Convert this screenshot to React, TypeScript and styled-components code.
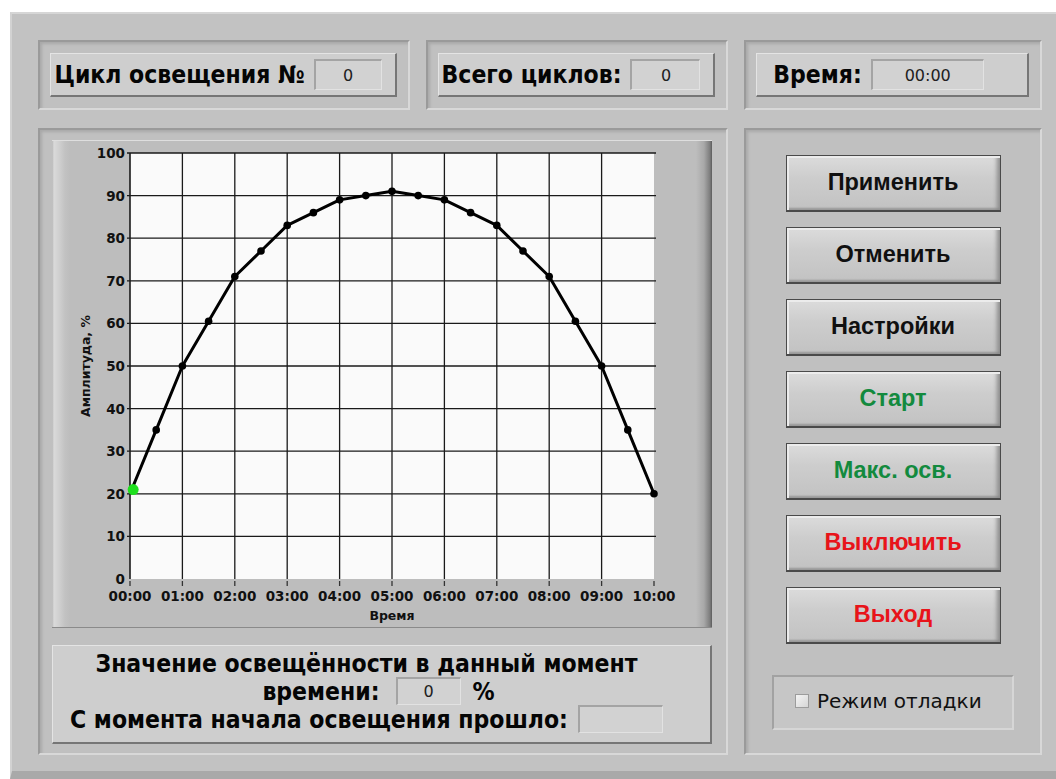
import styled, { createGlobalStyle } from "styled-components";

const GlobalStyle = createGlobalStyle`
  html, body {
    margin: 0;
    padding: 0;
    background: #ffffff;
  }
  body {
    font-family: "DejaVu Sans", sans-serif;
  }
`;

const Window = styled.div`
  margin: 12px 0 0 10px;
  box-sizing: border-box;
  height: 767px;
  background: #c2c2c2;
  border-top: 2px solid #d6d6d6;
  border-left: 2px solid #d2d2d2;
  border-bottom: 8px solid #a9a9a9;
  padding: 26px 16px 16px 26px;
  display: grid;
  grid-template-columns: 372px 302px 298px;
  grid-template-rows: 70px 627px;
  column-gap: 16px;
  row-gap: 18px;
`;

const Frame = styled.div<{ $span?: number }>`
  grid-column: span ${(p) => p.$span ?? 1};
  box-sizing: border-box;
  background: #c0c0c0;
  border-top: 2px solid #9a9a9a;
  border-left: 2px solid #9a9a9a;
  border-right: 2px solid #d8d8d8;
  border-bottom: 2px solid #d8d8d8;
  box-shadow: inset 2px 2px 3px rgba(0, 0, 0, 0.12);
`;

const TopFrame = styled(Frame)`
  padding: 11px 11px 11px 10px;
`;

const Plate = styled.div`
  box-sizing: border-box;
  background: #cecece;
  border-top: 1px solid #e4e4e4;
  border-left: 1px solid #e4e4e4;
  border-right: 2px solid #767676;
  border-bottom: 2px solid #767676;
`;

const LabelPlate = styled(Plate)<{ $shift?: number }>`
  height: 100%;
  display: flex;
  align-items: center;
  justify-content: center;
  gap: 9px;
  padding-right: ${(p) => p.$shift ?? 10}px;
`;

const Label = styled.span`
  font-family: "DejaVu Sans Condensed", "DejaVu Sans", sans-serif;
  font-stretch: condensed;
  font-weight: bold;
  font-size: 24.5px;
  color: #050505;
  white-space: nowrap;
`;

const Field = styled.div<{ $w: number; $h?: number }>`
  box-sizing: border-box;
  width: ${(p) => p.$w}px;
  height: ${(p) => p.$h ?? 31}px;
  background: #d2d2d2;
  border-top: 2px solid #a4a4a4;
  border-left: 2px solid #a4a4a4;
  border-right: 1px solid #e2e2e2;
  border-bottom: 1px solid #e2e2e2;
  display: inline-flex;
  align-items: center;
  justify-content: center;
  vertical-align: middle;
  font-family: "DejaVu Sans", sans-serif;
  font-size: 16px;
  font-weight: normal;
  color: #202020;
`;

const GraphFrame = styled(Frame)`
  padding: 10px 14px 7px 12px;
  display: flex;
  flex-direction: column;
  gap: 17px;
`;

const ChartBox = styled.div`
  height: 488px;
  box-sizing: border-box;
  border-top: 1px solid #dedede;
  border-bottom: 1px solid #8a8a8a;
  background: linear-gradient(
    to right,
    #b8b8b8 0,
    #dadada 2px,
    #d0d0d0 7px,
    #c2c2c2 13px,
    #bdbdbd 18px,
    #bdbdbd calc(100% - 16px),
    #a8a8a8 calc(100% - 8px),
    #7c7c7c calc(100% - 2px),
    #5c5c5c 100%
  );
`;

const InfoPlate = styled(Plate)`
  height: 99px;
  padding: 3px 30px 0 0;
  display: flex;
  flex-direction: column;
  align-items: center;
`;

const InfoLine = styled.div<{ $indent?: number }>`
  height: 28px;
  display: flex;
  align-items: center;
  gap: 10px;
  padding-left: ${(p) => p.$indent ?? 0}px;
`;

const InlineField = styled(Field)`
  margin: 0 2px 0 6px;
`;

const ControlFrame = styled(Frame)`
  padding-top: 25px;
  display: flex;
  flex-direction: column;
  align-items: center;
  gap: 15px;
`;

const tones = {
  black: "#101010",
  green: "#138a3e",
  red: "#e8141a",
};

const Button = styled.button<{ $tone: keyof typeof tones }>`
  width: 215px;
  height: 57px;
  box-sizing: border-box;
  margin: 0;
  padding: 0 0 2px;
  border: 1px solid #4a4a4a;
  border-bottom-width: 2px;
  background: linear-gradient(to bottom, #dcdcdc 0%, #cdcdcd 40%, #c2c2c2 100%);
  box-shadow: inset 2px 2px 0 #ececec, inset -5px 0 4px -2px #8c8c8c,
    inset 0 -3px 2px -1px #9a9a9a;
  font-family: "Liberation Sans", Arial, sans-serif;
  font-weight: bold;
  font-size: 23.5px;
  color: ${(p) => tones[p.$tone]};
  cursor: pointer;
`;

const DebugBox = styled.label`
  margin-top: 16px;
  width: 242px;
  height: 55px;
  box-sizing: border-box;
  background: #c6c6c6;
  border-top: 2px solid #a2a2a2;
  border-left: 2px solid #a2a2a2;
  border-right: 2px solid #d6d6d6;
  border-bottom: 2px solid #d6d6d6;
  display: flex;
  align-items: center;
  padding: 0 0 3px 21px;
  gap: 8px;
  font-family: "DejaVu Sans", sans-serif;
  font-size: 20px;
  color: #111111;
`;

const CheckSquare = styled.span`
  width: 14px;
  height: 14px;
  box-sizing: border-box;
  border: 1px solid #9c9c9c;
  background: linear-gradient(135deg, #f4f4f4, #d6d6d6);
`;

/* chart geometry, relative to the chart box */
const PX = 78;
const PY = 12;
const PW = 524;
const PH = 426;
const xAt = (h: number) => PX + (h / 10) * PW;
const yAt = (v: number) => PY + PH - (v / 100) * PH;

const curve = [
  20, 35, 50, 60.5, 71, 77, 83, 86, 89, 90, 91, 90, 89, 86, 83, 77, 71, 60.5, 50,
  35, 20,
];

const hours = Array.from({ length: 11 }, (_, i) => i);
const levels = Array.from({ length: 11 }, (_, i) => i * 10);

function Chart() {
  const pts = curve.map((v, i) => [xAt(i / 2), yAt(v)] as const);
  return (
    <svg width="660" height="486" viewBox="0 0 660 486">
      <rect x={PX} y={PY} width={PW} height={PH} fill="#fafafa" />
      {hours.slice(0, 10).map((h) => (
        <line
          key={"v" + h}
          x1={xAt(h)}
          x2={xAt(h)}
          y1={PY}
          y2={PY + PH}
          stroke="#1a1a1a"
          strokeWidth={h === 0 ? 1.6 : 1.3}
        />
      ))}
      {levels.slice(1).map((v) => (
        <line
          key={"h" + v}
          x1={PX - 3}
          x2={PX + PW + 2}
          y1={yAt(v)}
          y2={yAt(v)}
          stroke="#1a1a1a"
          strokeWidth={1.3}
        />
      ))}
      {hours.map((h) => (
        <line
          key={"t" + h}
          x1={xAt(h)}
          x2={xAt(h)}
          y1={PY + PH + 2}
          y2={PY + PH + 7}
          stroke="#333"
          strokeWidth={1.3}
        />
      ))}
      <g fontFamily="'DejaVu Sans', sans-serif" fontWeight="bold" fontSize="13.5" fill="#111">
        {levels.map((v) => (
          <text key={"yl" + v} x={PX - 5} y={yAt(v) + 5} textAnchor="end">
            {v}
          </text>
        ))}
        {hours.map((h) => (
          <text key={"xl" + h} x={xAt(h)} y={PY + PH + 22} textAnchor="middle">
            {String(h).padStart(2, "0")}:00
          </text>
        ))}
      </g>
      <text
        x={PX + PW / 2}
        y={PY + PH + 41}
        textAnchor="middle"
        fontFamily="'DejaVu Sans', sans-serif"
        fontWeight="bold"
        fontSize="12.5"
        fill="#111"
      >
        Время
      </text>
      <text
        transform="translate(38 225) rotate(-90)"
        textAnchor="middle"
        fontFamily="'DejaVu Sans', sans-serif"
        fontWeight="bold"
        fontSize="12.5"
        fill="#111"
      >
        Амплитуда, %
      </text>
      <polyline
        points={pts.map((p) => p.join(",")).join(" ")}
        fill="none"
        stroke="#000"
        strokeWidth={3}
        strokeLinejoin="round"
      />
      {pts.slice(1).map(([x, y], i) => (
        <circle key={"m" + i} cx={x} cy={y} r={3.8} fill="#000" />
      ))}
      <circle cx={xAt(0.06)} cy={yAt(21)} r={5.5} fill="#1ee01e" />
    </svg>
  );
}

export default function App() {
  return (
    <>
      <GlobalStyle />
      <Window>
        <TopFrame>
          <LabelPlate>
            <Label>Цикл освещения №</Label>
            <Field $w={68}>0</Field>
          </LabelPlate>
        </TopFrame>
        <TopFrame>
          <LabelPlate>
            <Label>Всего циклов:</Label>
            <Field $w={70}>0</Field>
          </LabelPlate>
        </TopFrame>
        <TopFrame>
          <LabelPlate $shift={27}>
            <Label>Время:</Label>
            <Field $w={113}>00:00</Field>
          </LabelPlate>
        </TopFrame>

        <GraphFrame $span={2}>
          <ChartBox>
            <Chart />
          </ChartBox>
          <InfoPlate>
            <InfoLine>
              <Label>Значение освещённости в данный момент</Label>
            </InfoLine>
            <InfoLine $indent={24}>
              <Label>времени:</Label>
              <InlineField $w={65} $h={28}>
                0
              </InlineField>
              <Label>%</Label>
            </InfoLine>
            <InfoLine>
              <Label>С момента начала освещения прошло:</Label>
              <Field $w={85} $h={28} />
            </InfoLine>
          </InfoPlate>
        </GraphFrame>

        <ControlFrame>
          <Button $tone="black">Применить</Button>
          <Button $tone="black">Отменить</Button>
          <Button $tone="black">Настройки</Button>
          <Button $tone="green">Старт</Button>
          <Button $tone="green">Макс. осв.</Button>
          <Button $tone="red">Выключить</Button>
          <Button $tone="red">Выход</Button>
          <DebugBox>
            <CheckSquare />
            Режим отладки
          </DebugBox>
        </ControlFrame>
      </Window>
    </>
  );
}
